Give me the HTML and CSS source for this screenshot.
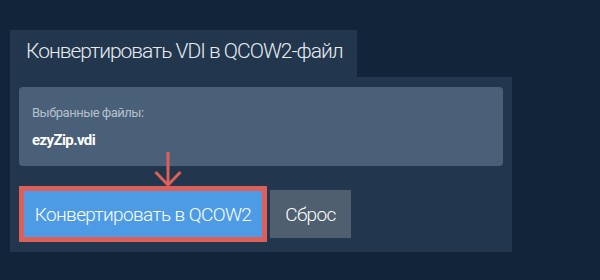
FILE: index.html
```html
<!DOCTYPE html>
<html lang="ru">
<head>
    <meta charset="UTF-8">
    <meta name="viewport" content="width=device-width, initial-scale=1.0">
    <title>Конвертировать VDI в QCOW2-файл</title>
    <link rel="stylesheet" href="styles.css">
</head>
<body>
    <div class="converter">
        <div class="tab">Конвертировать VDI в QCOW2-файл</div>
        <div class="panel">
            <div class="files">
                <p class="files-label">Выбранные файлы:</p>
                <p class="files-name">ezyZip.vdi</p>
            </div>

            <div class="actions">
                <div class="highlight">
                    <svg class="arrow" width="28" height="36" viewBox="0 0 28 36">
                        <path d="M14 1 V34 M1.5 21 L14 34 L26.5 21" fill="none" stroke="#dc5f5a" stroke-width="3"/>
                    </svg>
                    <button class="btn btn-convert">Конвертировать в QCOW2</button>
                </div>
                <button class="btn btn-reset">Сброс</button>
            </div>
        </div>
    </div>
</body>
</html>
```

FILE: styles.css
```css
* {
    box-sizing: border-box;
    margin: 0;
    padding: 0;
    font-family: 'Roboto', 'Inter', sans-serif;
}

body {
    background-color: #12243a;
    padding: 30px 0 0 10px;
}

.converter {
    width: 502px;
}

.tab {
    width: 347px;
    height: 47px;
    padding: 9px 0 0 16px;
    background-color: #22364d;
    color: #e6ebf1;
    font-size: 21px;
    font-weight: 300;
    letter-spacing: -1px;
    white-space: nowrap;
}

.panel {
    background-color: #22364d;
    padding: 10px 9px 10px;
}

.files {
    height: 79px;
    padding: 18px 13px 0;
    background-color: #4a6079;
    border-radius: 4px;
}

.files-label {
    color: #b4c0cd;
    font-size: 13px;
    letter-spacing: -0.5px;
}

.files-name {
    margin-top: 11px;
    color: #ffffff;
    font-size: 15px;
    font-weight: 700;
    letter-spacing: -0.6px;
}

.actions {
    display: flex;
    align-items: center;
    gap: 3px;
    margin-top: 20px;
}

.highlight {
    position: relative;
    border: 5px solid #dc5f5a;
}

.arrow {
    position: absolute;
    left: 130px;
    top: -40px;
}

.btn {
    display: block;
    border: none;
    color: #ffffff;
    font-family: 'Roboto', sans-serif;
    font-size: 19px;
    font-weight: 300;
    letter-spacing: -0.6px;
}

.btn-convert {
    width: 238px;
    height: 46px;
    background-color: #4d9be5;
}

.btn-reset {
    width: 81px;
    height: 48px;
    background-color: #4f5f70;
}
```
